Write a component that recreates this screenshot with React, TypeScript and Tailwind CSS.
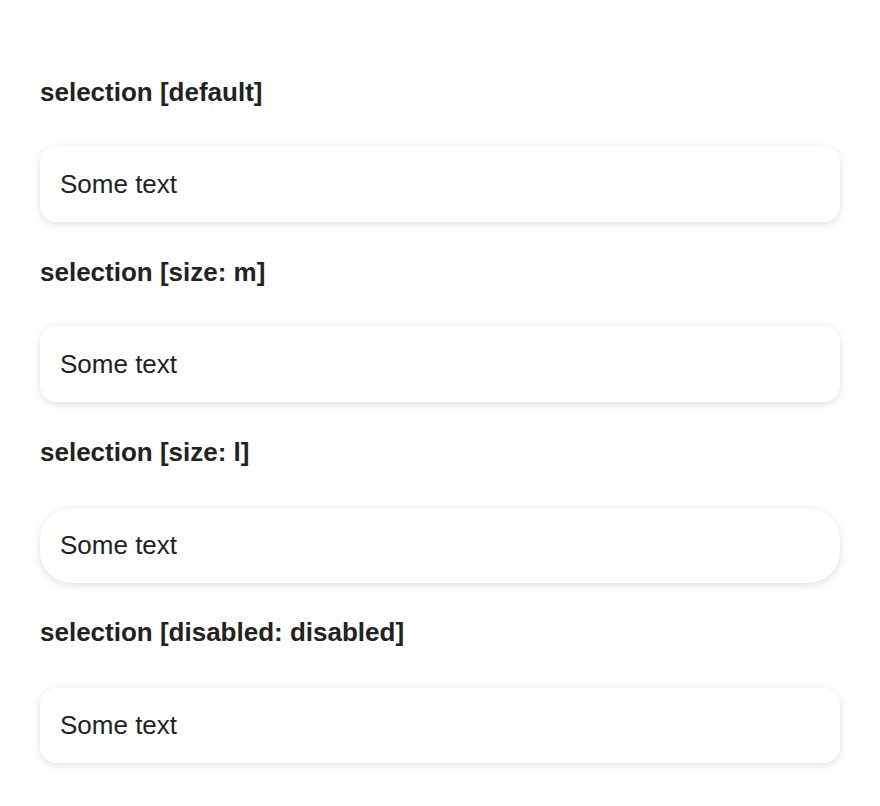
const SECTIONS = [
  { title: 'selection [default]', card: 'mt-[38px] h-[76px] rounded-2xl' },
  { title: 'selection [size: m]', card: 'mt-[38px] h-[76px] rounded-2xl' },
  { title: 'selection [size: l]', card: 'mt-[40px] h-[75px] rounded-[32px]' },
  { title: 'selection [disabled: disabled]', card: 'mt-[40px] h-[75px] rounded-2xl' },
]

export default function App() {
  return (
    <div className="min-h-screen bg-white px-10 pt-[77px] font-['Liberation_Sans',Arial,sans-serif] text-[#222]">
      {SECTIONS.map(s => (
        <section key={s.title} className="h-[180px]">
          <h2 className="text-[26px] leading-[31px] font-bold">{s.title}</h2>
          {/* card */}
          <div
            className={`flex items-center bg-white px-5 text-[26px] shadow-[0_2px_8px_rgba(0,0,0,0.13)] ${s.card}`}
          >
            Some text
          </div>
        </section>
      ))}
    </div>
  )
}
